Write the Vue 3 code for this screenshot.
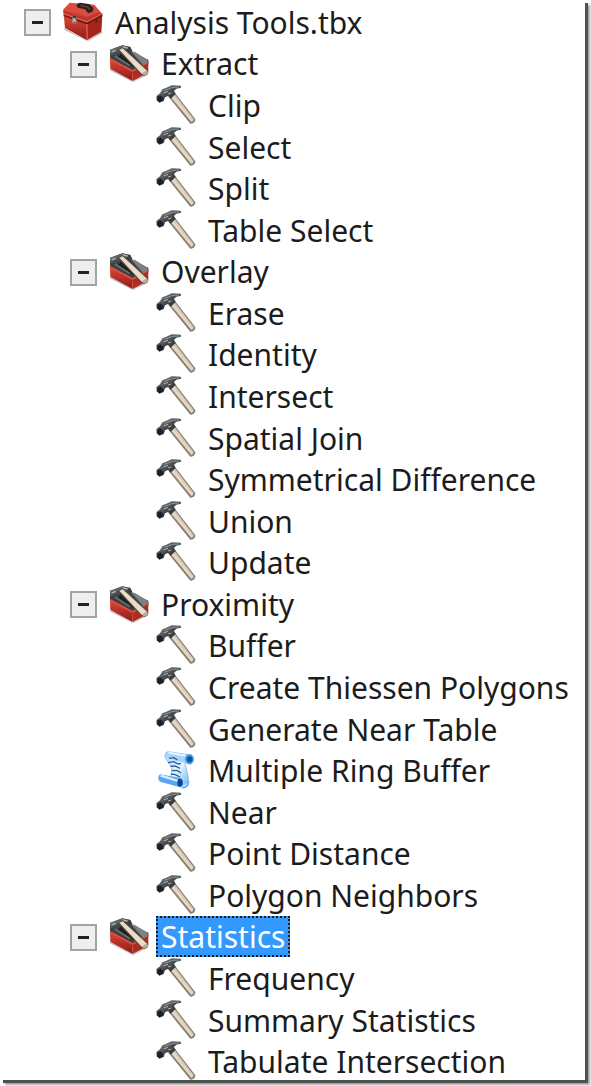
<template>
  <main class="panel">
    <ul class="tree" aria-label="Toolboxes">
      <li v-for="row in rows" :key="row.name" class="row" :class="row.type">
        <button
          v-if="row.type !== 'leaf'"
          class="toggle"
          type="button"
          :aria-expanded="!closed[row.name]"
          :aria-label="`Toggle ${row.name}`"
          @click="closed[row.name] = !closed[row.name]"
        >
          <svg viewBox="0 0 23 23" aria-hidden="true">
            <path d="M6 11.5h11" />
            <path v-if="closed[row.name]" d="M11.5 6v11" />
          </svg>
        </button>

        <svg class="icon" viewBox="0 0 120 120" aria-hidden="true">
          <use :href="`#icon-${row.icon}`" />
        </svg>

        <button
          class="label"
          :class="{ selected: selected === row.name }"
          type="button"
          @click="selected = row.name"
        >{{ row.name }}</button>
      </li>
    </ul>

    <svg class="sprite" aria-hidden="true">
      <defs>
        <linearGradient id="lid" x1="0" y1="0" x2="1" y2="1">
          <stop offset="0" stop-color="#e65a4c" />
          <stop offset="1" stop-color="#b82b20" />
        </linearGradient>
        <linearGradient id="front" x1="0" y1="0" x2="0" y2="1">
          <stop offset="0" stop-color="#e0483a" />
          <stop offset="1" stop-color="#8e1b14" />
        </linearGradient>
        <linearGradient id="steel" x1="0" y1="0" x2="1" y2="1">
          <stop offset="0" stop-color="#8b9094" />
          <stop offset="0.5" stop-color="#44484b" />
          <stop offset="1" stop-color="#1c1e20" />
        </linearGradient>
        <linearGradient id="paper" x1="0" y1="0" x2="1" y2="1">
          <stop offset="0" stop-color="#a9d6fa" />
          <stop offset="0.5" stop-color="#e6f5ff" />
          <stop offset="1" stop-color="#58a9ee" />
        </linearGradient>

        <symbol id="icon-toolbox" viewBox="0 0 120 120">
          <path d="M3 78l69 38 46-28v5l-45 25L4 83z" fill="#777" opacity="0.5" />
          <path d="M2 38l70 25v52L6 78z" fill="url(#front)" />
          <path d="M72 63l46-24-3 50-43 26z" fill="#a6251b" />
          <path d="M1 22L20 2l74 6 24 29-46 25L2 37z" fill="url(#lid)" />
          <path d="M1 24l71 25 46-16v7L72 64 2 38z" fill="#c23428" />
          <path d="M22 4l70 6 18 19-38 15L9 22z" fill="#d94c3f" />
          <path d="M2 40l70 25 46-25" fill="none" stroke="#641510" stroke-width="4" />
          <path d="M2 35l70 24 46-24" fill="none" stroke="#ea8075" stroke-width="2" />
          <path d="M72 66v47" stroke="#ef7567" stroke-width="3" />
          <path d="M40 8l10-6 28 4 14 12-4 12-13 3-9-11-22-5z" fill="#252423" />
          <path d="M52 10l22 5 7 8" fill="none" stroke="#8c3932" stroke-width="4" />
          <path d="M29 39l11 3v21l-5 4-7-5z" fill="#b3afaa" />
          <path d="M29 39l11 3v8l-11-3zM30 61l5 4 5-4" fill="#4b3936" />
          <path d="M97 52l7-4v12l-7 4z" fill="#66201b" />
        </symbol>

        <symbol id="icon-toolset" viewBox="0 0 120 120">
          <path d="M4 79l68 35 44-24v5l-44 23L4 83z" fill="#777" opacity="0.4" />
          <path d="M3 20L18 15 40 7l24 5 7 17 47 21v14l-47 27L3 54z" fill="#3e4143" />
          <path d="M3 46l68 36v32L4 78z" fill="url(#front)" />
          <path d="M71 82l47-26v33l-47 25z" fill="#b02c21" />
          <path d="M3 48l68 36 47-27" fill="none" stroke="#e0503f" stroke-width="5" />
          <path d="M8 34l63 38 20-10-55-39z" fill="#1d1f20" />
          <path d="M3 21l20-8 17-6 24 5 7 14-21-5-13 6-7 14-27-5z" fill="url(#steel)" />
          <path d="M8 27l12-5M40 12l16 3" stroke="#b2b7ba" stroke-width="4" />
          <path d="M66 25l12 2 38 23-4 12-12 2z" fill="#7c8184" />
          <path d="M18 39l45 29" stroke="#6f7376" stroke-width="5" />
          <path d="M26 21l15-9 76 69-1 13-9 5-12-6z" fill="#554b42" />
          <path d="M31 20l10-4 74 68-2 9-7 3-8-4z" fill="#eadcc7" />
          <path d="M99 91l15-9 3 9-9 7z" fill="#b9ac9a" />
        </symbol>

        <symbol id="icon-hammer" viewBox="0 0 120 120">
          <path d="M38 36l17-15 62 80c4 7-6 17-14 15z" fill="#857d71" />
          <path d="M43 35l11-10 59 77c1 4-4 9-7 9z" fill="#d9cab3" />
          <path d="M49 33l58 73" stroke="#eadfcd" stroke-width="4" />
          <path d="M74 2L47 1 31 8 19 13 12 25 1 33 2 46l8 7 13-5 4-11 9-4 8 8 15-14-5-9 7-7 14-3z" fill="url(#steel)" />
          <path d="M26 16l16-6 8-3 20-1" fill="none" stroke="#929799" stroke-width="3" />
          <path d="M4 35l9-4 9 9-1 6-10 6-8-6z" fill="#1d1f20" />
          <path d="M23 24l13-5M36 27l10-3" stroke="#aeb3b5" stroke-width="3" />
        </symbol>

        <symbol id="icon-script" viewBox="0 0 120 120">
          <path d="M35 5c-9 4-11 15-4 24l17 24-4 31 35 21c16-1 20-15 17-28L86 37l18 6c10-8 11-23 2-28z" fill="url(#paper)" stroke="#64aae6" stroke-width="2" />
          <path d="M35 5l69 10c-14 2-19 12-15 25L35 25c-7-7-7-16 0-20z" fill="#a7d5fa" />
          <path d="M38 8l50 9" stroke="#edf8ff" stroke-width="5" />
          <ellipse cx="100" cy="28" rx="13" ry="15" fill="#3e96e5" />
          <ellipse cx="101" cy="28" rx="8" ry="9" fill="#144f9c" />
          <path d="M12 73c-7 5-7 17 0 22l60 17c12-4 12-22 2-28z" fill="#58a8f0" />
          <path d="M14 77l53 16" stroke="#d8f0ff" stroke-width="7" />
          <ellipse cx="72" cy="98" rx="8" ry="12" fill="#0d4391" />
          <path d="M77 112c14 2 22-8 20-20" fill="none" stroke="#69b2f0" stroke-width="6" />
          <path d="M39 25l15-2 10 7M36 38l17-3 14 7 8-1M43 49l14-1 15 7M48 62l15-1 12 8M45 72l13 2 14 7" fill="none" stroke="#285e9d" stroke-width="4" />
        </symbol>
      </defs>
    </svg>
  </main>
</template>

<script setup>
import { computed, reactive, ref } from 'vue'

const toolbox = {
  name: 'Analysis Tools.tbx',
  toolsets: [
    { name: 'Extract', tools: ['Clip', 'Select', 'Split', 'Table Select'] },
    {
      name: 'Overlay',
      tools: ['Erase', 'Identity', 'Intersect', 'Spatial Join', 'Symmetrical Difference', 'Union', 'Update'],
    },
    {
      name: 'Proximity',
      tools: [
        'Buffer',
        'Create Thiessen Polygons',
        'Generate Near Table',
        'Multiple Ring Buffer',
        'Near',
        'Point Distance',
        'Polygon Neighbors',
      ],
    },
    { name: 'Statistics', tools: ['Frequency', 'Summary Statistics', 'Tabulate Intersection'] },
  ],
}

const scripts = ['Multiple Ring Buffer']

const selected = ref('Statistics')
const closed = reactive({})

// flat list of the rows that are currently visible
const rows = computed(() => {
  const list = [{ name: toolbox.name, type: 'root', icon: 'toolbox' }]
  if (closed[toolbox.name]) return list

  toolbox.toolsets.forEach((set) => {
    list.push({ name: set.name, type: 'branch', icon: 'toolset' })
    if (closed[set.name]) return
    set.tools.forEach((name) => {
      list.push({ name, type: 'leaf', icon: scripts.includes(name) ? 'script' : 'hammer' })
    })
  })
  return list
})
</script>

<style>
body {
  background: #ffffff;
}
</style>

<style scoped>
.panel {
  position: relative;
  display: grid;
  box-sizing: border-box;
  min-height: 100vh;
  padding: 3px 0 2px;
  overflow: hidden;
  font-family: "Noto Sans", "Open Sans", sans-serif;
  font-size: 30px;
  color: #1c1c1c;
}

/* window edge with its drop shadow */
.panel::before {
  content: "";
  position: absolute;
  inset: 3px 3px 3px 3px;
  border: solid #505050;
  border-width: 0 3px 3px 0;
  box-shadow: 2px 2px 2px #a0a0a0;
  clip-path: inset(0 -6px -6px 0);
  pointer-events: none;
}

/* one track per row, so the rows keep their height when a branch is closed */
.tree {
  position: relative;
  display: grid;
  grid-template-rows: repeat(26, minmax(41px, 1fr));
  margin: 0;
  padding: 0;
  list-style: none;
}

.row {
  display: flex;
  align-items: center;
  min-width: 0;
}

.root {
  padding-left: 24px;
}

.branch {
  padding-left: 70px;
}

.leaf {
  padding-left: 156px;
}

.toggle {
  flex: none;
  width: 27px;
  height: 27px;
  margin: 0 12px 2px 0;
  padding: 0;
  border: 2px solid #a3a3a3;
  background: #eeeeee;
  cursor: pointer;
}

.toggle svg {
  display: block;
  width: 100%;
  height: 100%;
}

.toggle path {
  stroke: #222222;
  stroke-width: 3;
}

.icon {
  flex: none;
  width: 40px;
  height: 40px;
  margin: -4px 7px 0 0;
}

.label {
  height: 41px;
  margin: -3px 0 0;
  padding: 0 5px;
  border: 0;
  background: none;
  color: inherit;
  font: inherit;
  line-height: 41px;
  white-space: nowrap;
  cursor: default;
}

.label.selected {
  background: #3399ff;
  color: #ffffff;
  outline: 2px dotted #2b1a08;
  outline-offset: -2px;
}

.sprite {
  position: absolute;
  width: 0;
  height: 0;
}
</style>
